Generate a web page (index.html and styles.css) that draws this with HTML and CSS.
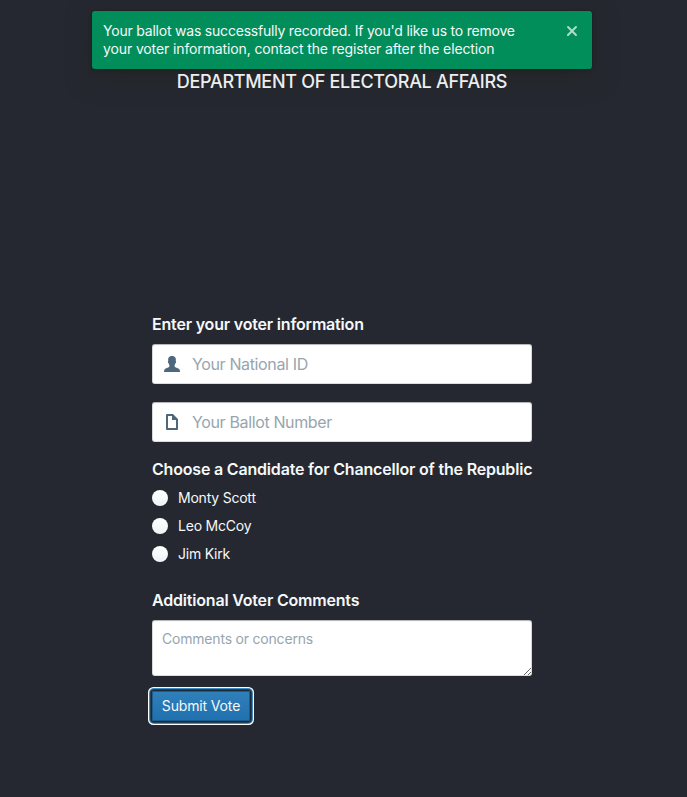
FILE: index.html
```html
<!DOCTYPE html>
<html lang="en">
<head>
<meta charset="utf-8">
<title>Department of Electoral Affairs</title>
<link rel="stylesheet" href="styles.css">
</head>
<body>
<div class="toast" role="status">
  <p class="toast-message"><span class="toast-lead">Your ballot was successfully recorded. If you'd like us to remove</span><br>your voter information, contact the register after the election</p>
  <button class="toast-close" aria-label="Close">
    <svg width="16" height="16" viewBox="0 0 16 16"><path d="M9.41 8l3.29-3.29a1 1 0 0 0-1.41-1.42L8 6.59 4.71 3.3A1 1 0 0 0 3.3 4.71L6.59 8 3.3 11.29a1 1 0 1 0 1.41 1.41L8 9.41l3.29 3.29a1 1 0 0 0 1.41-1.41z"/></svg>
  </button>
</div>
<main class="page">
  <h1 class="title">DEPARTMENT OF ELECTORAL AFFAIRS</h1>
  <form class="form">
    <h2 class="heading voter-heading">Enter your voter information</h2>
    <label class="field">
      <svg class="field-icon" width="16" height="16" viewBox="0 0 16 16"><path d="M16 15.5c-.05-.44-.13-.9-.26-1.28-.13-.52-.31-.94-.56-1.13-.36-.28-1.38-.8-2.14-1.1-.74-.28-1.54-.64-2.05-1.02-.18-.12-.39-.67-.39-.94-.01-.35 0-.65.02-.98.37-.42.61-1.06.69-1.61 0 0 .43-.2.66-.85.18-.5.16-1.4-.23-1.7.25-1.75.17-2.63-.68-3.7C10.4.45 9.35 0 8 0S5.6.45 4.94 1.19c-.85 1.07-.93 1.95-.68 3.7-.39.3-.41 1.2-.23 1.7.23.65.66.85.66.85.08.55.32 1.19.69 1.61.02.33.03.63.02.98 0 .27-.21.82-.39.94-.51.38-1.31.74-2.05 1.02-.76.3-1.78.82-2.14 1.1-.25.19-.43.61-.56 1.13A8 8 0 0 0 0 15.5V16h16z"/></svg>
      <input class="input" type="text" placeholder="Your National ID">
    </label>
    <label class="field">
      <svg class="field-icon" width="16" height="16" viewBox="0 0 16 16"><path d="M9 0H3c-.55 0-1 .45-1 1v14c0 .55.45 1 1 1h10c.55 0 1-.45 1-1V5L9 0zm3 14H4V2h4v4h4v8z"/></svg>
      <input class="input" type="text" placeholder="Your Ballot Number">
    </label>
    <h2 class="heading candidate-heading">Choose a Candidate for Chancellor of the Republic</h2>
    <div class="radios">
      <label class="radio"><input type="radio" name="candidate"><span>Monty Scott</span></label>
      <label class="radio"><input type="radio" name="candidate"><span>Leo McCoy</span></label>
      <label class="radio"><input type="radio" name="candidate"><span>Jim Kirk</span></label>
    </div>
    <h2 class="heading comments-heading">Additional Voter Comments</h2>
    <textarea class="comments" placeholder="Comments or concerns"></textarea>
    <button class="submit" type="button">Submit Vote</button>
  </form>
</main>
</body>
</html>
```
FILE: styles.css
```css
* { box-sizing: border-box; }
html { background: #252830; }
body {
  margin: 0;
  width: 684px;
  height: 797px;
  overflow: hidden;
  color: #f5f8fa;
  font: 14px/18px Inter, "Liberation Sans", sans-serif;
}
h1, h2, p { margin: 0; }
input, textarea, button { font-family: inherit; }

.toast {
  position: absolute;
  top: 11px;
  left: 92px;
  width: 500px;
  height: 58px;
  display: flex;
  justify-content: space-between;
  background: #028e5a;
  border-radius: 3px;
  box-shadow: 0 0 0 1px rgba(16, 22, 26, .15), 0 2px 4px rgba(16, 22, 26, .2), 0 8px 24px rgba(36, 36, 34, .6);
}
.toast-message {
  padding: 11px 0 0 11px;
  color: #f5f8fa;
  white-space: nowrap;
  letter-spacing: -.12px;
}
.toast-lead { letter-spacing: -.21px; }
.toast-close {
  width: 30px;
  height: 30px;
  margin: 5px;
  padding: 7px;
  border: 0;
  background: none;
}
.toast-close svg { display: block; fill: #b0dccb; }

.page {
  display: flex;
  flex-direction: column;
  align-items: center;
  padding-top: 71px;
}
.title {
  position: relative;
  z-index: 1;
  color: #eceeef;
  font-size: 18px;
  line-height: 21px;
  font-weight: 550;
  letter-spacing: -.3px;
  white-space: nowrap;
}
.form {
  width: 380px;
  margin-top: 223px;
}
.heading {
  height: 19px;
  font-size: 16px;
  line-height: 19px;
  font-weight: 600;
  letter-spacing: -.19px;
  white-space: nowrap;
}
.voter-heading { margin-bottom: 10px; }
.field {
  display: flex;
  align-items: center;
  height: 40px;
  margin-bottom: 18px;
  padding-left: 12px;
  background: #fff;
  border-radius: 3px;
  box-shadow: inset 0 0 0 1px rgba(16, 22, 26, .15), inset 0 1px 1px rgba(16, 22, 26, .2);
}
.field-icon { flex: none; fill: #4f677a; }
.input {
  flex: 1;
  min-width: 0;
  height: 38px;
  margin-left: 12px;
  padding: 0;
  border: 0;
  outline: 0;
  background: none;
  font-size: 16px;
  letter-spacing: -.36px;
}
::placeholder { color: #98a5ae; opacity: 1; }
.radios { margin-top: 10px; }
.radio {
  display: flex;
  align-items: center;
  gap: 10px;
  height: 18px;
  margin-bottom: 10px;
  letter-spacing: -.22px;
}
.radio input {
  appearance: none;
  width: 16px;
  height: 16px;
  margin: 0;
  border-radius: 50%;
  background: linear-gradient(#fff, #eff3f6);
}
.comments-heading { margin: 28px 0 10px; }
.comments {
  display: block;
  width: 380px;
  height: 56px;
  padding: 10px;
  border: 0;
  border-radius: 3px;
  outline: 0;
  resize: vertical;
  overflow: hidden;
  background: #fff;
  font-size: 14px;
  line-height: 18px;
  letter-spacing: -.2px;
  box-shadow: inset 0 0 0 1px rgba(16, 22, 26, .15), inset 0 1px 1px rgba(16, 22, 26, .2);
}
.submit {
  display: block;
  width: 98px;
  height: 30px;
  margin-top: 15px;
  padding: 0;
  border: 0;
  border-radius: 2px;
  color: #f5f8fa;
  font-size: 14px;
  line-height: 30px;
  letter-spacing: -.15px;
  white-space: nowrap;
  background: linear-gradient(#2f80bb, #1f70ae);
  box-shadow: inset 0 0 0 1px #1f5c8c, 0 0 0 1px #1c2a38, 0 0 0 2px #22455f, 0 0 0 3px #3f8dc4, 0 0 0 4px #fff;
}
```
